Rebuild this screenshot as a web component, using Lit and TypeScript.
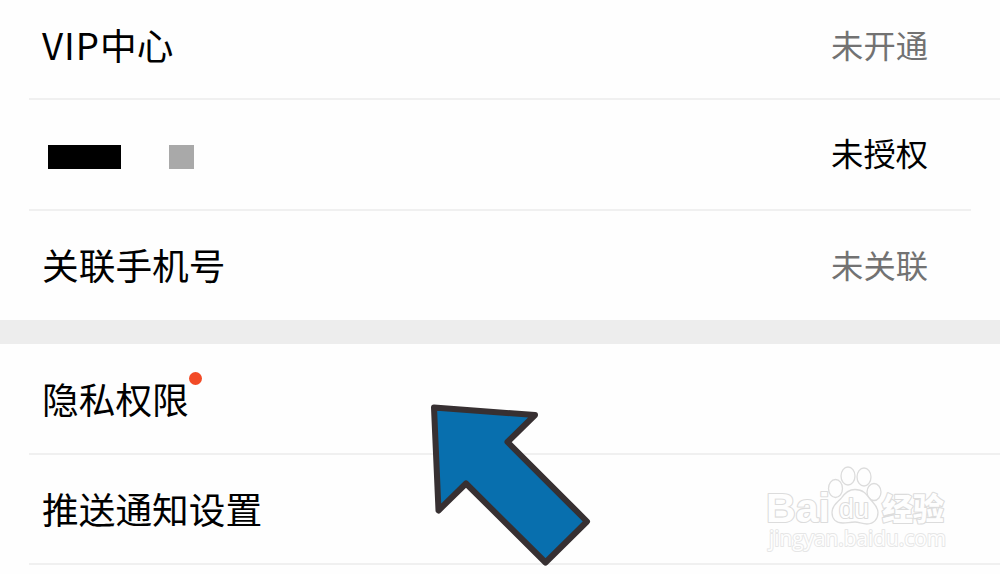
import { LitElement, css, html, svg } from "lit";
import { customElement, property } from "lit/decorators.js";

@customElement("settings-row")
export class SettingsRow extends LitElement {
  static styles = css`
    :host {
      display: flex;
      box-sizing: border-box;
      height: 110px;
      margin-left: 29px;
      padding: 0 72px 2px 13px;
      align-items: center;
      justify-content: space-between;
      border-bottom: 2px solid #f0f0f0;
      color: #000;
    }
    :host(.first) { height: 100px; padding-bottom: 10px; }
    :host(.tall) { height: 111px; padding-bottom: 1px; }
    :host(.inset) {
      height: 111px;
      margin-right: 29px;
      padding: 0 43px 6px 13px;
    }
    :host(.last) { height: 109px; padding-bottom: 4px; border-bottom: none; }
    .label {
      display: flex;
      font-size: 36.7px;
      line-height: 54px;
      white-space: nowrap;
    }
    .latin { letter-spacing: 1px; }
    .value {
      font-size: 32.3px;
      line-height: 48px;
      color: #727272;
    }
    .value.strong { color: #000; }
    .dot {
      width: 13px;
      height: 13px;
      margin-top: 1px;
      border-radius: 50%;
      background: #f24a26;
    }
  `;

  @property() latin = "";
  @property() label = "";
  @property() value = "";
  @property({ type: Boolean }) strong = false;
  @property({ type: Boolean }) dot = false;

  render() {
    return html`
      <div class="label">
        ${this.latin ? html`<span class="latin">${this.latin}</span>` : ""}
        <slot>${this.label}</slot>
        ${this.dot ? html`<span class="dot"></span>` : ""}
      </div>
      <div class="value ${this.strong ? "strong" : ""}">${this.value}</div>
    `;
  }
}

@customElement("baidu-mark")
export class BaiduMark extends LitElement {
  static styles = css`
    :host { display: block; }
    svg { display: block; }
    .outline {
      fill: #fefefe;
      stroke: #dcdcdc;
      stroke-width: 1.3;
    }
    text.outline {
      paint-order: stroke;
      stroke-width: 2.2;
      stroke-linejoin: round;
    }
    .brand { font: bold 41px "Liberation Sans", Arial, sans-serif; }
    .du { font: 27px "Liberation Sans", Arial, sans-serif; }
    .cn { font: 900 31px "Noto Sans CJK SC", sans-serif; }
    text.url {
      font: 22.5px "Open Sans", sans-serif;
      stroke: #e6e6e6;
      stroke-width: 2;
    }
  `;

  render() {
    const toes = [
      [85.5, 33.5, 7, 9],
      [98, 21, 7, 9],
      [114, 22, 7, 9],
      [124, 37, 7, 8.5],
    ];
    return html`
      <svg width="250" height="119" viewBox="0 0 250 119">
        <text class="outline brand" x="16" y="67" textLength="64" lengthAdjust="spacingAndGlyphs">Bai</text>
        ${toes.map(([cx, cy, rx, ry]) => svg`
          <ellipse class="outline" cx=${cx} cy=${cy} rx=${rx} ry=${ry} />
        `)}
        <path class="outline" d="M105 34.500C98 34.500 94 39 91 43.500C88 47 82 50 82 57.500C82 64 86 68 93 68C97 68 100 67 105 67C109 67 112 69 117 69C124 69 128 64 128 57.500C128 51 123 48 120 44C116 38.500 113 34.500 105 34.500Z" />
        <text class="outline du" x="89" y="63" textLength="30" lengthAdjust="spacingAndGlyphs">du</text>
        <text class="outline cn" x="132" y="65" textLength="62" lengthAdjust="spacingAndGlyphs">经验</text>
        <text class="outline url" x="19" y="91" textLength="177" lengthAdjust="spacingAndGlyphs">jingyan.baidu.com</text>
      </svg>
    `;
  }
}

@customElement("app-root")
export class AppRoot extends LitElement {
  static styles = css`
    :host {
      display: block;
      position: relative;
      width: 1000px;
      height: 574px;
      overflow: hidden;
      background: #fefefe;
      font-family: "Noto Sans CJK SC", sans-serif;
    }
    .gap { height: 24px; background: #ededed; }
    .masked { display: flex; gap: 48px; padding: 10px 0 0 6px; }
    .block { width: 73px; height: 24px; background: #000; }
    .block.small { width: 25px; background: #a9a9a9; }
    .arrow {
      position: absolute;
      left: 410px;
      top: 390px;
    }
    .arrow path {
      fill: #086fae;
      stroke: #373032;
      stroke-width: 6;
      stroke-linejoin: round;
    }
    .mark {
      position: absolute;
      left: 750px;
      top: 455px;
    }
  `;

  render() {
    return html`
      <settings-row class="first" latin="VIP" label="中心" value="未开通"></settings-row>
      <settings-row class="inset" value="未授权" strong>
        <div class="masked">
          <span class="block"></span>
          <span class="block small"></span>
        </div>
      </settings-row>
      <settings-row class="last" label="关联手机号" value="未关联"></settings-row>
      <div class="gap"></div>
      <settings-row class="tall" label="隐私权限" dot></settings-row>
      <settings-row label="推送通知设置"></settings-row>

      <baidu-mark class="mark"></baidu-mark>
      <svg class="arrow" width="200" height="184" viewBox="0 0 200 184">
        <path d="M24 17.5L125 25L97.500 52L177 131.500L135.500 172.500L56 93.500L28.500 120.500Z" />
      </svg>
    `;
  }
}
